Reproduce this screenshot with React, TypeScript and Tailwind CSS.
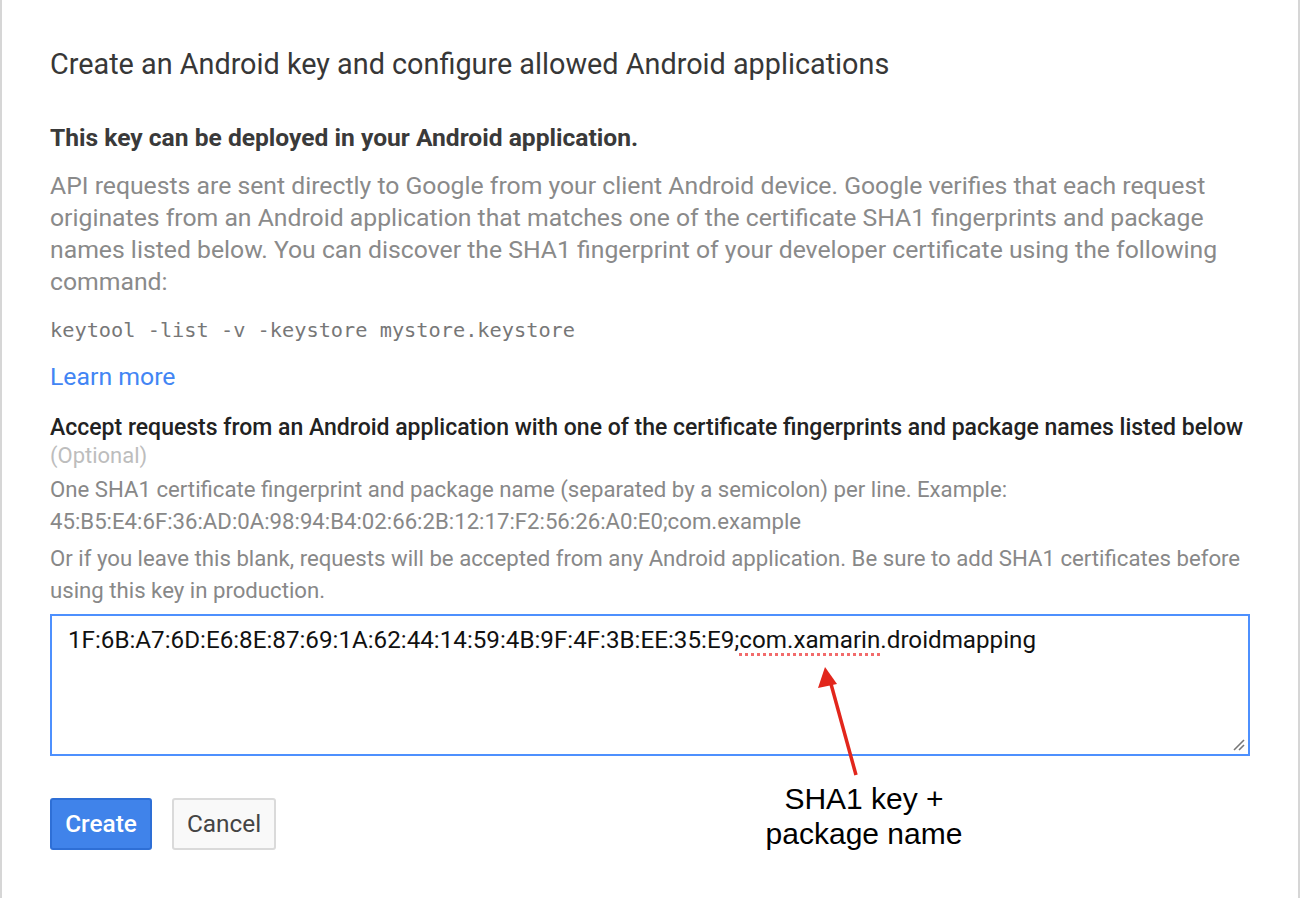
import React from "react";

export default function App() {
  return (
    <div className="relative w-[1300px] h-[898px] bg-white border-l-2 border-r-2 border-[#d6d6d6] overflow-hidden" style={{ fontFamily: "Roboto, 'Liberation Sans', sans-serif" }}>
      <div className="pl-[48px] pr-[48px] pt-[48px]">
        <h1 className="text-[28.8px] leading-[32px] text-[#373737] font-normal whitespace-nowrap">
          Create an Android key and configure allowed Android applications
        </h1>
        <h2 className="mt-[42px] text-[24.6px] leading-[32px] font-bold text-[#3a3a3a] whitespace-nowrap">
          This key can be deployed in your Android application.
        </h2>
        <p className="mt-[16px] text-[24.75px] leading-[32px] text-[#8a8a8a]">
          API requests are sent directly to Google from your client Android device. Google verifies that each request originates from an Android application that matches one of the certificate SHA1 fingerprints and package names listed below. You can discover the SHA1 fingerprint of your developer certificate using the following command:
        </p>
        <div className="mt-[16px] text-[20.3px] leading-[32px] text-[#777]" style={{ fontFamily: "'DejaVu Sans Mono', 'Liberation Mono', monospace" }}>
          keytool -list -v -keystore mystore.keystore
        </div>
        <div className="mt-[15px] text-[24.8px] leading-[32px] text-[#4285f4]">Learn more</div>
        <div className="mt-[21px] text-[23px] leading-[28px] font-medium text-[#222] whitespace-nowrap">
          Accept requests from an Android application with one of the certificate fingerprints and package names listed below
        </div>
        <div className="text-[22px] leading-[28px] text-[#bdbdbd]">(Optional)</div>
        <div className="mt-[3px] text-[22.2px] leading-[32px] text-[#888]">
          One SHA1 certificate fingerprint and package name (separated by a semicolon) per line. Example:
          <br />
          45:B5:E4:6F:36:AD:0A:98:94:B4:02:66:2B:12:17:F2:56:26:A0:E0;com.example
        </div>
        <div className="mt-[5px] text-[22.2px] leading-[32px] text-[#888]">
          Or if you leave this blank, requests will be accepted from any Android application. Be sure to add SHA1 certificates before using this key in production.
        </div>
        <div className="relative mt-[8px] h-[142px] border-2 border-[#4d90fe] px-[16px] pt-[8px] text-[24.2px] leading-[32px] text-[#111]">
          1F:6B:A7:6D:E6:8E:87:69:1A:62:44:14:59:4B:9F:4F:3B:EE:35:E9;
          <span className="relative">
            com.xamarin
            <span className="absolute left-0 right-0 bottom-[-2px] border-b-[3px] border-dotted border-[#f26b6b]"></span>
          </span>
          .droidmapping
          <svg className="absolute right-[2px] bottom-[2px]" width="14" height="14" viewBox="0 0 14 14">
            <line x1="2" y1="12" x2="12" y2="2" stroke="#777" strokeWidth="1.6" />
            <line x1="7" y1="12" x2="12" y2="7" stroke="#777" strokeWidth="1.6" />
          </svg>
        </div>
        <div className="mt-[42px] flex gap-[20px]">
          <button className="h-[52px] w-[102px] rounded-[3px] border-2 border-[#2e6fd6] bg-[#4083ea] text-[24.4px] font-medium text-white">
            Create
          </button>
          <button className="h-[52px] w-[104px] rounded-[3px] border-2 border-[#dadada] bg-[#f9f9f9] text-[24.4px] text-[#444]">
            Cancel
          </button>
        </div>
      </div>
      <svg className="absolute left-0 top-0 pointer-events-none" width="1300" height="898">
        <line x1="854" y1="775" x2="829" y2="684" stroke="#e2261c" strokeWidth="3.5" />
        <polygon points="823,667 816,688 835,684" fill="#e2261c" />
      </svg>
      <div className="absolute left-[712px] top-[781px] w-[300px] text-center text-[30px] leading-[35px] text-black" style={{ fontFamily: "'Liberation Sans', Arial, sans-serif" }}>
        SHA1 key +
        <br />
        package name
      </div>
    </div>
  );
}
